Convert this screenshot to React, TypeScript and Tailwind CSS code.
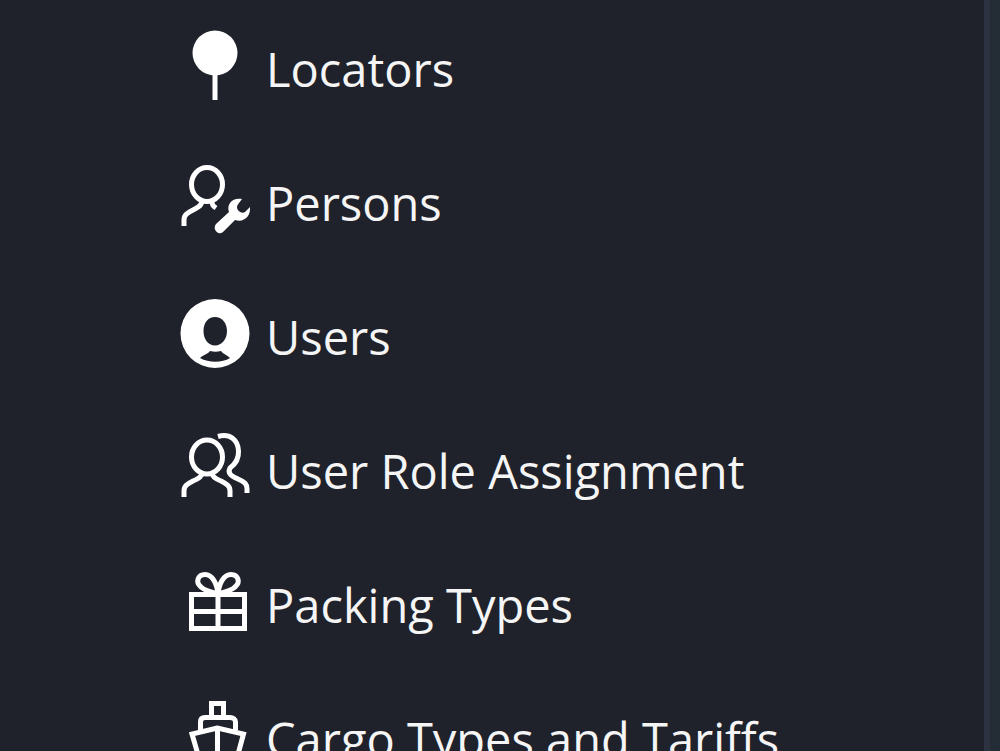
import type { ReactNode } from "react";

type MenuItem = { label: string; icon: ReactNode };

function Icon({ children }: { children: ReactNode }) {
  return (
    <svg
      viewBox="0 0 70 70"
      className="size-[70px] shrink-0 overflow-visible"
      fill="none"
      stroke="currentColor"
      strokeWidth="5"
      aria-hidden="true"
    >
      {children}
    </svg>
  );
}

const items: MenuItem[] = [
  {
    label: "Locators",
    icon: (
      <Icon>
        <circle cx="35" cy="23" r="22.5" fill="currentColor" stroke="none" />
        <path d="M35 42V70" />
      </Icon>
    ),
  },
  {
    label: "Persons",
    icon: (
      <Icon>
        <ellipse cx="27" cy="20.5" rx="15.5" ry="17" />
        <path d="M22 37C22 42 18 43 13 46C7 49 4 51 4 56V62M32 37C32 41 33 42 36 44" />
        <path
          d="M62 35C53 33 46 40 49 48L36 60C32 65 38 72 43 68L55 56C64 59 71 52 70 43L65 48C62 50 57 47 57 43C57 41 59 39 62 35Z"
          fill="currentColor"
          stroke="none"
        />
      </Icon>
    ),
  },
  {
    label: "Users",
    icon: (
      <Icon>
        <path
          d="M35 1A34.500 34.500 0 1 1 35 70A34.500 34.500 0 1 1 35 1ZM35 19C28 19 23.500 25 23.500 33C23.500 41 28 47.500 35 47.500C42 47.500 47 41 47 33C47 25 42 19 35 19ZM30 53C28 56 23 57 20 60C29 65 42 65 50 60C47 57 43 56 41 53C37 54 34 54 30 53Z"
          fill="currentColor"
          fillRule="evenodd"
          stroke="none"
        />
      </Icon>
    ),
  },
  {
    label: "User Role Assignment",
    icon: (
      <Icon>
        <ellipse cx="27" cy="25" rx="15.5" ry="17" />
        <path d="M22 41C22 45 18 47 13 49C7 52 4 54 4 59V65M32 41C32 45 36 47 41 49C47 52 50 54 50 59V65" />
        <path d="M38 4.500C50 1 58 8 58.500 19C59 27 54 33 50 36C47 42 52 44 58 47C65 50 67 52 67 57V61" />
      </Icon>
    ),
  },
  {
    label: "Packing Types",
    icon: (
      <Icon>
        <path d="M11.500 28.500H64.500V62.500H11.500ZM11.500 45.500H64.500M38 28V62" />
        <path d="M38 28C37 17 32 8.500 25 8.500C18 8.500 15 16 21 21C25 25 31 26 38 28C45 26 51 25 55 21C61 16 58 8.500 51 8.500C44 8.500 39 17 38 28Z" />
      </Icon>
    ),
  },
  {
    label: "Cargo Types and Tariffs",
    icon: (
      <Icon>
        <path d="M31.500 17V3.500H43.500V17" />
        <path d="M20.500 30V22C20.500 19 22 17.500 25 17.500H50C53 17.500 55.500 19 55.500 22V30" />
        <path d="M37.500 28L12 34L19 58L37.500 64L57 58L63.500 34Z M37.500 28V62" />
      </Icon>
    ),
  },
];

export default function App() {
  return (
    <div className="flex h-screen overflow-hidden bg-[#1f222b] font-['Open_Sans','Noto_Sans',sans-serif]">
      <nav aria-label="Master data" className="min-w-0 flex-1 pl-[180px] pt-[30px]">
        <ul className="flex flex-col gap-16">
          {items.map((item) => (
            <li key={item.label}>
              <a href="#" className="flex h-[70px] gap-4 whitespace-nowrap text-white">
                {item.icon}
                <span className="text-[47px] leading-[79px] text-[#f5f5f5]">{item.label}</span>
              </a>
            </li>
          ))}
        </ul>
      </nav>
      <div className="w-4 shrink-0 border-l-[6px] border-[#2d3240] bg-[#242d35]" />
    </div>
  );
}
